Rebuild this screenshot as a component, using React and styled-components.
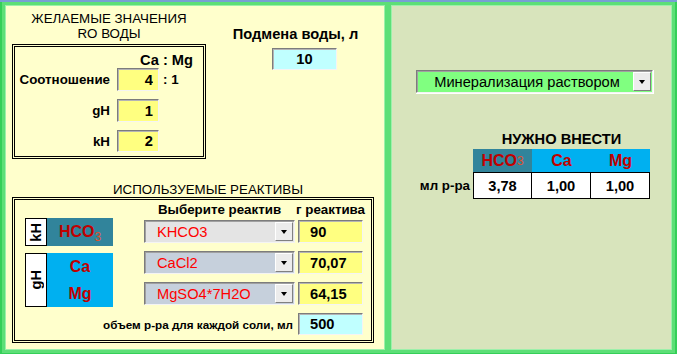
import styled, { createGlobalStyle } from "styled-components";

const GlobalStyle = createGlobalStyle`
  html, body {
    margin: 0;
    padding: 0;
    background: #fff;
  }
  body {
    font-family: "Liberation Sans", Arial, sans-serif;
    color: #000;
  }
`;

const reagents = [
  { name: "KHCO3", bg: "#e4e4e4", grams: "90" },
  { name: "CaCl2", bg: "#c6d0dc", grams: "70,07" },
  { name: "MgSO4*7H2O", bg: "#c6d0dc", grams: "64,15" },
];

const results = [
  { ion: "HCO", sub: "3", bg: "#31849b", value: "3,78" },
  { ion: "Ca", bg: "#00b0f0", value: "1,00" },
  { ion: "Mg", bg: "#00b0f0", value: "1,00" },
];

function Dropdown({ bg, color, align, children }) {
  return (
    <Select $bg={bg}>
      <SelectText $color={color} $align={align}>{children}</SelectText>
      <DropButton />
    </Select>
  );
}

function App() {
  return (
    <>
      <GlobalStyle />
      <Screen>
        <Panels>
          <LeftPanel>
            <TopArea>
              <DesiredColumn>
                <Title>ЖЕЛАЕМЫЕ ЗНАЧЕНИЯ<br />RO ВОДЫ</Title>
                <DesiredBox>
                  <RatioHeader>Ca : Mg</RatioHeader>
                  <FieldList>
                    <FieldRow $h={23}>
                      <FieldLabel>Соотношение</FieldLabel>
                      <Field $bg="#ffff80" $align="right" $pr={5} value="4" />
                      <Suffix>: 1</Suffix>
                    </FieldRow>
                    <FieldRow $h={23}>
                      <FieldLabel>gH</FieldLabel>
                      <Field $bg="#ffff80" $align="right" $pr={5} value="1" />
                    </FieldRow>
                    <FieldRow $h={22}>
                      <FieldLabel>kH</FieldLabel>
                      <Field $bg="#ffff80" $align="right" $pr={5} value="2" />
                    </FieldRow>
                  </FieldList>
                </DesiredBox>
              </DesiredColumn>
              <WaterColumn>
                <WaterLabel>Подмена воды, л</WaterLabel>
                <WaterField $bg="#c0ffff" $align="center" value="10" />
              </WaterColumn>
            </TopArea>

            <SectionTitle>ИСПОЛЬЗУЕМЫЕ РЕАКТИВЫ</SectionTitle>
            <ReagentBox>
              <HeadCell $col="2">Выберите реактив</HeadCell>
              <HeadCell $col="3">г реактива</HeadCell>

              <Group $rows="2" $margin="-2px 0 -3px">
                <SideTag><span>kH</span></SideTag>
                <Chem $bg="#31849b">
                  <span>HCO<sub>3</sub></span>
                </Chem>
              </Group>
              <Group $rows="3 / 5" $margin="2px 0 -2px">
                <SideTag><span>gH</span></SideTag>
                <Chem $bg="#00b0f0">
                  <span>Ca</span>
                  <span>Mg</span>
                </Chem>
              </Group>

              {reagents.map((r, i) => (
                <ReagentRow key={r.name} $row={i + 2}>
                  <Dropdown bg={r.bg} color="#ff0000" align="left">{r.name}</Dropdown>
                  <Field $bg="#ffff80" $align="left" $pl={11} value={r.grams} />
                </ReagentRow>
              ))}

              <VolumeLabel>объем р-ра для каждой соли, мл</VolumeLabel>
              <VolumeCell>
                <Field $bg="#c0ffff" $align="left" $pl={11} value="500" />
              </VolumeCell>
            </ReagentBox>
          </LeftPanel>

          <RightPanel>
            <ModeSelect>
              <Dropdown bg="#80ff80" color="#000" align="center">Минерализация раствором</Dropdown>
            </ModeSelect>
            <ResultGrid>
              <ResultTitle>НУЖНО ВНЕСТИ</ResultTitle>
              <span />
              {results.map((r) => (
                <IonHead key={r.ion} $bg={r.bg}>
                  {r.ion}{r.sub && <sub>{r.sub}</sub>}
                </IonHead>
              ))}
              <RowLabel>мл р-ра</RowLabel>
              {results.map((r) => (
                <ValueCell key={r.ion}>{r.value}</ValueCell>
              ))}
            </ResultGrid>
          </RightPanel>
        </Panels>
      </Screen>
    </>
  );
}

const Screen = styled.div`
  width: 677px;
  height: 354px;
  box-sizing: border-box;
  display: flex;
  flex-direction: column;
  background: #34cf58;
  border-top: 2px solid #789fd4;
  padding: 0 2px 1px;
`;

const Panels = styled.div`
  display: flex;
  flex: 1;
  min-height: 0;
`;

const Panel = styled.section`
  box-sizing: border-box;
  border: 3px solid #5ddf77;
  box-shadow: inset 0 0 0 1px #9cf0aa;
  display: flex;
  flex-direction: column;
`;

const LeftPanel = styled(Panel)`
  width: 386px;
  background: #ffffcc;
  padding: 0 0 0 7px;
`;

const RightPanel = styled(Panel)`
  flex: 1;
  background: #d8e4bc;
  padding: 65px 0 0 0;
`;

const TopArea = styled.div`
  display: flex;
`;

const DesiredColumn = styled.div`
  width: 194px;
  display: flex;
  flex-direction: column;
  padding-top: 6px;
`;

const Title = styled.div`
  font-size: 13.33px;
  line-height: 15px;
  text-align: center;
`;

const DoubleBox = styled.div`
  box-sizing: border-box;
  border: 3px double #000;
`;

const DesiredBox = styled(DoubleBox)`
  margin-top: 3px;
  padding: 5px 0 4px;
`;

const RatioHeader = styled.div`
  font-size: 14.67px;
  font-weight: bold;
  line-height: 16px;
  text-align: right;
  padding-right: 10px;
`;

const FieldList = styled.div`
  display: flex;
  flex-direction: column;
  gap: 8px;
`;

const FieldRow = styled.div`
  display: grid;
  grid-template-columns: 95px 42px auto;
  column-gap: 7px;
  align-items: center;
  height: ${(p) => p.$h}px;
`;

const FieldLabel = styled.span`
  text-align: right;
  font-size: 13.33px;
  font-weight: bold;
  white-space: nowrap;
`;

const Suffix = styled.span`
  margin-left: -3px;
  font-size: 13.33px;
  font-weight: bold;
`;

const Field = styled.input.attrs({ readOnly: true })`
  box-sizing: border-box;
  width: 100%;
  height: 100%;
  margin: 0;
  font-family: "Liberation Sans", Arial, sans-serif;
  font-size: 14.67px;
  font-weight: bold;
  color: #000;
  background: ${(p) => p.$bg};
  border: 1px solid;
  border-color: #7c7c7c #f4f4f4 #f4f4f4 #7c7c7c;
  box-shadow: inset 1px 1px 0 #b4b4b4;
  padding: 0 ${(p) => p.$pr || 0}px 0 ${(p) => p.$pl || 0}px;
  text-align: ${(p) => p.$align};
  outline: none;
`;

const WaterColumn = styled.div`
  flex: 1;
  display: flex;
  flex-direction: column;
  padding-top: 21px;
`;

const WaterLabel = styled.div`
  font-size: 14.67px;
  font-weight: bold;
  line-height: 17px;
  text-align: center;
`;

const WaterField = styled(Field)`
  width: 65px;
  height: 22px;
  margin: 5px 0 0 66px;
`;

const SectionTitle = styled.div`
  margin-top: 23px;
  padding-left: 101px;
  font-size: 13.33px;
  line-height: 15px;
`;

const ReagentBox = styled(DoubleBox)`
  width: 362px;
  display: grid;
  grid-template-columns: 116px 151px 65px;
  grid-template-rows: auto 23px 23px 23px 22px;
  column-gap: 3px;
  row-gap: 8px;
  padding: 0 8px 5px 10px;
`;

const HeadCell = styled.div`
  grid-row: 1;
  grid-column: ${(p) => p.$col};
  justify-self: center;
  white-space: nowrap;
  font-size: 13.33px;
  font-weight: bold;
  line-height: 20px;
  margin-bottom: -8px;
`;

const Group = styled.div`
  grid-column: 1;
  grid-row: ${(p) => p.$rows};
  width: 88px;
  display: flex;
  margin: ${(p) => p.$margin};
`;

const SideTag = styled.div`
  width: 22px;
  box-sizing: border-box;
  border: 1px solid #000;
  background: #fff;
  display: flex;
  align-items: center;
  justify-content: center;
  font-size: 14.67px;
  font-weight: bold;

  span {
    writing-mode: vertical-rl;
    transform: rotate(180deg);
  }
`;

const subStyle = `
  sub {
    font-size: 12px;
    font-weight: normal;
    color: #e0502a;
    line-height: 0;
    vertical-align: -4px;
  }
`;

const Chem = styled.div`
  flex: 1;
  background: ${(p) => p.$bg};
  display: flex;
  flex-direction: column;
  align-items: center;
  justify-content: space-around;
  color: #c00000;
  font-size: 16px;
  font-weight: bold;
  ${subStyle}
`;

const ReagentRow = styled.div`
  grid-column: 2 / 4;
  grid-row: ${(p) => p.$row};
  display: grid;
  grid-template-columns: 151px 65px;
  column-gap: 3px;
`;

const Select = styled.div`
  box-sizing: border-box;
  height: 100%;
  display: flex;
  align-items: stretch;
  background: ${(p) => p.$bg};
  border: 1px solid;
  border-color: #7c7c7c #f4f4f4 #f4f4f4 #7c7c7c;
  box-shadow: inset 1px 1px 0 #a0a0a0;
  padding: 1px 1px 1px 0;
`;

const SelectText = styled.span`
  flex: 1;
  display: flex;
  align-items: center;
  justify-content: ${(p) => (p.$align === "center" ? "center" : "flex-start")};
  padding-left: ${(p) => (p.$align === "center" ? 4 : 12)}px;
  font-size: 14.67px;
  color: ${(p) => p.$color};
  white-space: nowrap;
`;

const DropButton = styled.span`
  width: 18px;
  box-sizing: border-box;
  background: #ececec;
  border: 1px solid;
  border-color: #fff #808080 #808080 #fff;
  display: flex;
  align-items: center;
  justify-content: center;

  &::after {
    content: "";
    border-left: 3.5px solid transparent;
    border-right: 3.5px solid transparent;
    border-top: 4px solid #000;
  }
`;

const VolumeLabel = styled.div`
  grid-column: 1 / 3;
  grid-row: 5;
  align-self: center;
  justify-self: end;
  padding-right: 2px;
  font-size: 11.7px;
  font-weight: bold;
  white-space: nowrap;
`;

const VolumeCell = styled.div`
  grid-column: 3;
  grid-row: 5;
`;

const ModeSelect = styled.div`
  width: 238px;
  height: 24px;
  margin-left: 25px;
  border-right: 1px solid #fff;
  border-bottom: 1px solid #fff;
  box-sizing: border-box;
`;

const ResultGrid = styled.div`
  display: grid;
  grid-template-columns: 82px 59px 59px 59px;
  grid-template-rows: auto 23px 27px;
  margin-top: 37px;
`;

const ResultTitle = styled.div`
  grid-column: 2 / 5;
  text-align: center;
  font-size: 14.67px;
  font-weight: bold;
  line-height: 16px;
  margin-bottom: 2px;
`;

const IonHead = styled.div`
  background: ${(p) => p.$bg};
  color: #c00000;
  font-size: 16px;
  font-weight: bold;
  display: flex;
  align-items: center;
  justify-content: center;
  ${subStyle}
`;

const RowLabel = styled.div`
  align-self: center;
  justify-self: end;
  padding-right: 3px;
  font-size: 13.33px;
  font-weight: bold;
`;

const ValueCell = styled.div`
  box-sizing: border-box;
  background: #fff;
  border: 1px solid #000;
  display: flex;
  align-items: center;
  justify-content: center;
  font-size: 14.67px;
  font-weight: bold;

  & + & {
    border-left: none;
  }
`;

export default App;
